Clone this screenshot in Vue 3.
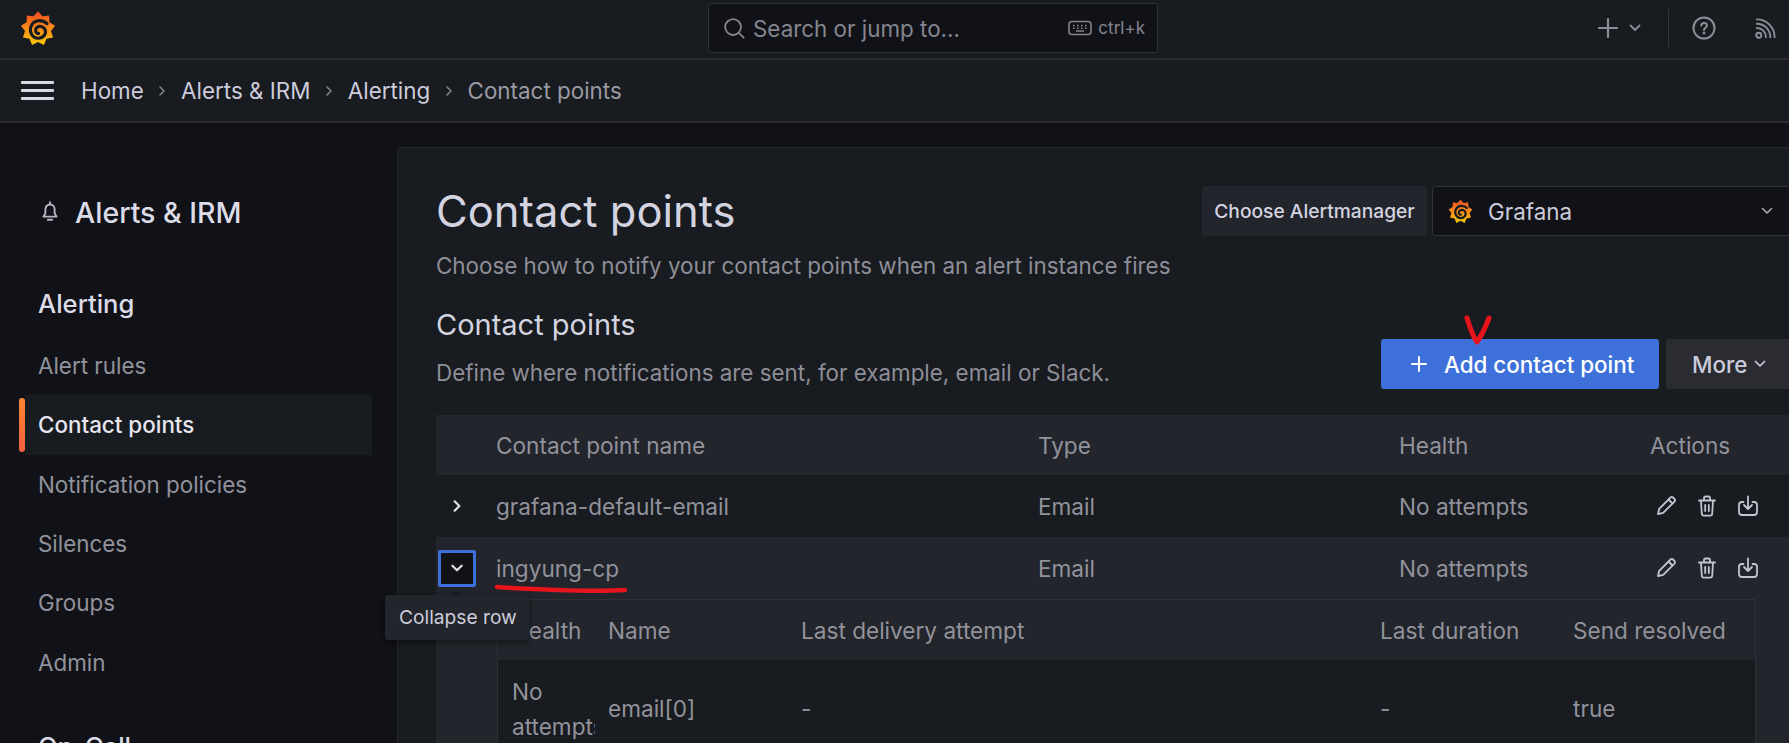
<template>
  <div class="app">
    <svg class="defs" width="0" height="0">
      <defs>
        <linearGradient id="sun" x1="0" y1="0" x2="0" y2="1">
          <stop offset="0" stop-color="#ea4a1f" />
          <stop offset="0.4" stop-color="#f97f1c" />
          <stop offset="1" stop-color="#fbca0a" />
        </linearGradient>
        <symbol id="logo" viewBox="0 0 24 24">
          <path :d="sunPath" fill="url(#sun)" />
          <path
            d="M18 9.2C15.6 6.4 10 6.2 7.8 10C5.6 14 8 18.8 12.2 18.8C15.6 18.8 17.6 16 16.8 13.4C16 11 12.6 10 10.9 12C9.7 13.5 10.6 15.6 12.4 15.6"
            fill="none"
            stroke="#181b1f"
            stroke-width="2.1"
            stroke-linecap="round"
          />
        </symbol>
      </defs>
    </svg>

    <header class="topbar">
      <svg class="top-logo"><use href="#logo" /></svg>
      <div class="search">
        <svg class="search-icon" viewBox="0 0 24 24" fill="none" stroke="currentColor" stroke-width="2">
          <circle cx="11" cy="11" r="8.6" />
          <path d="M17.5 17.5L22.5 22.5" stroke-linecap="round" />
        </svg>
        <span class="search-text">Search or jump to...</span>
        <svg class="kbd-icon" viewBox="0 0 24 16" fill="none" stroke="currentColor" stroke-width="1.6">
          <rect x="1" y="1.5" width="22" height="13" rx="3" />
          <path d="M5 5.6h1.5M9 5.6h1.5M13 5.6h1.5M17 5.6h1.5M5 8.2h1.5M9 8.2h1.5M13 8.2h1.5M17 8.2h1.5M8 11h8" />
        </svg>
        <span class="kbd-text">ctrl+k</span>
      </div>
      <div class="top-actions">
        <svg class="plus-icon" viewBox="0 0 22 22" fill="none" stroke="currentColor" stroke-width="2.2" stroke-linecap="round">
          <path d="M11 2v18M2 11h18" />
        </svg>
        <svg class="small-chevron" viewBox="0 0 12 8" fill="none" stroke="currentColor" stroke-width="1.8" stroke-linecap="round" stroke-linejoin="round">
          <path d="M1.5 1.5L6 6l4.5-4.5" />
        </svg>
        <span class="top-divider"></span>
        <svg class="help-icon" viewBox="0 0 24 24" fill="none" stroke="currentColor" stroke-width="2">
          <circle cx="12" cy="12" r="10.5" />
          <path d="M9.2 9.6C9.4 7.9 10.6 7 12.1 7c1.6 0 2.8 1 2.8 2.4 0 2.3-2.9 2.3-2.9 4.6" stroke-linecap="round" />
          <circle cx="12" cy="17" r="0.6" />
        </svg>
        <svg class="rss-icon" viewBox="0 0 24 24" fill="none" stroke="currentColor" stroke-width="2" stroke-linecap="round">
          <circle cx="5" cy="19" r="2.6" />
          <path d="M3 11.5a9.5 9.5 0 0 1 9.5 9.5M3 7a14 14 0 0 1 14 14M3 2.5A18.5 18.5 0 0 1 21.5 21" />
        </svg>
      </div>
    </header>

    <nav class="crumbbar">
      <div class="burger"><span></span><span></span><span></span></div>
      <template v-for="(crumb, i) in crumbs" :key="crumb">
        <span class="crumb" :class="{ last: i === crumbs.length - 1 }">{{ crumb }}</span>
        <svg v-if="i < crumbs.length - 1" class="crumb-sep" viewBox="0 0 8 12" fill="none" stroke="currentColor" stroke-width="1.5" stroke-linecap="round" stroke-linejoin="round">
          <path d="M2 2l4 4-4 4" />
        </svg>
      </template>
    </nav>

    <div class="body">
      <aside class="sidebar">
        <div class="side-title">
          <svg class="bell" viewBox="0 0 16 20" fill="none" stroke="currentColor" stroke-width="1.7" stroke-linejoin="round">
            <path d="M8 3.2c-2.8 0-4.2 2.2-4.2 4.6v3.4L2 14.2h12l-1.8-3V7.800c0-2.400-1.400-4.600-4.200-4.600z" />
            <path d="M6 17h4M8 1v2" stroke-linecap="round" />
          </svg>
          <span>Alerts &amp; IRM</span>
        </div>
        <div class="side-heading">Alerting</div>
        <div class="side-list">
          <div v-for="item in navItems" :key="item" class="side-item" :class="{ active: item === 'Contact points' }">
            <span>{{ item }}</span>
          </div>
        </div>
        <div class="side-heading oncall">On-Call</div>
      </aside>

      <main class="panel">
        <div class="page-head">
          <div>
            <h1>Contact points</h1>
            <p class="subtitle">Choose how to notify your contact points when an alert instance fires</p>
          </div>
          <div class="am-picker">
            <div class="am-label">Choose Alertmanager</div>
            <div class="am-select">
              <svg class="am-logo"><use href="#logo" /></svg>
              <span>Grafana</span>
              <svg class="am-chevron" viewBox="0 0 12 8" fill="none" stroke="currentColor" stroke-width="1.6" stroke-linecap="round" stroke-linejoin="round">
                <path d="M1.500 1.500L6 6l4.500-4.500" />
              </svg>
            </div>
          </div>
        </div>

        <div class="section-head">
          <div>
            <h2>Contact points</h2>
            <p class="section-desc">Define where notifications are sent, for example, email or Slack.</p>
          </div>
          <div class="section-actions">
            <button class="btn-add">
              <svg viewBox="0 0 18 18" fill="none" stroke="currentColor" stroke-width="2" stroke-linecap="round">
                <path d="M9 2v14M2 9h14" />
              </svg>
              Add contact point
            </button>
            <button class="btn-more">
              More
              <svg viewBox="0 0 12 8" fill="none" stroke="currentColor" stroke-width="1.700" stroke-linecap="round" stroke-linejoin="round">
                <path d="M1.500 1.500L6 6l4.500-4.500" />
              </svg>
            </button>
          </div>
        </div>

        <div class="table">
          <div class="tr th">
            <span></span>
            <span>Contact point name</span>
            <span>Type</span>
            <span>Health</span>
            <span>Actions</span>
          </div>
          <div v-for="row in rows" :key="row.name" class="tr" :class="{ open: row.open }">
            <span class="toggle" :class="{ focused: row.open }">
              <svg viewBox="0 0 12 12" fill="none" stroke="currentColor" stroke-width="1.900" stroke-linecap="round" stroke-linejoin="round">
                <path :d="row.open ? 'M2 4l4 4 4-4' : 'M4 2l4 4-4 4'" />
              </svg>
            </span>
            <span>{{ row.name }}</span>
            <span>Email</span>
            <span>No attempts</span>
            <span class="actions">
              <svg viewBox="0 0 24 24" fill="none" stroke="currentColor" stroke-width="1.800" stroke-linejoin="round">
                <path d="M4 20l1.200-5.200L16.500 3.500a1.800 1.800 0 0 1 2.500 0l1.500 1.500a1.800 1.800 0 0 1 0 2.500L9.200 18.800zM14.500 5.500l4 4" />
              </svg>
              <svg viewBox="0 0 24 24" fill="none" stroke="currentColor" stroke-width="1.800" stroke-linecap="round" stroke-linejoin="round">
                <path d="M4 6.500h16M9 6V4a1.500 1.500 0 0 1 1.500-1.500h3A1.500 1.500 0 0 1 15 4v2M6 7l.8 13a2 2 0 0 0 2 1.700h6.400a2 2 0 0 0 2-1.700L18 7M10.200 11v6M13.800 11v6" />
              </svg>
              <svg viewBox="0 0 24 24" fill="none" stroke="currentColor" stroke-width="1.800" stroke-linecap="round" stroke-linejoin="round">
                <path d="M12 2.500v12M8 11l4 4 4-4M7.500 8H6a3 3 0 0 0-3 3v7a3 3 0 0 0 3 3h12a3 3 0 0 0 3-3v-7a3 3 0 0 0-3-3h-1.500" />
              </svg>
            </span>
          </div>
          <div class="expanded">
            <div class="nested">
              <div class="ntr nth">
                <span>Health</span>
                <span>Name</span>
                <span>Last delivery attempt</span>
                <span>Last duration</span>
                <span>Send resolved</span>
              </div>
              <div class="ntr nbody">
                <span class="nhealth">No attempts</span>
                <span>email[0]</span>
                <span>-</span>
                <span>-</span>
                <span>true</span>
              </div>
            </div>
          </div>
        </div>
      </main>
    </div>

    <div class="tooltip">Collapse row</div>

    <svg class="marks" width="1789" height="743" fill="none" stroke="#e8141c" stroke-linecap="round" stroke-linejoin="round">
      <path d="M1467 318C1470 328 1473 337 1477 342C1482 335 1486 326 1489 318" stroke-width="5" />
      <path d="M497 587C530 589 590 592 625 590" stroke-width="4.500" />
    </svg>
  </div>
</template>

<script setup>
  const crumbs = ['Home', 'Alerts & IRM', 'Alerting', 'Contact points'];
  const navItems = ['Alert rules', 'Contact points', 'Notification policies', 'Silences', 'Groups', 'Admin'];
  const rows = [
    { name: 'grafana-default-email', open: false },
    { name: 'ingyung-cp', open: true }
  ];

  // nine rounded rays around the logo's disc
  const buildSun = () => {
    const pts = [];
    const count = 9;
    for (let i = 0; i < count * 2; i++) {
      const r = i % 2 === 0 ? 11.6 : 8.8;
      const a = (i / (count * 2)) * Math.PI * 2 - Math.PI / 2;
      pts.push(`${(12 + Math.cos(a) * r).toFixed(2)} ${(12.5 + Math.sin(a) * r).toFixed(2)}`);
    }
    return `M${pts.join('L')}Z`;
  };
  const sunPath = buildSun();
</script>

<style>
  html, body {
    margin: 0;
    background: #111217;
  }
</style>

<style scoped>
  .app {
    position: relative;
    width: 1789px;
    height: 743px;
    overflow: hidden;
    background: #111217;
    color: #ccccdc;
    font-family: Inter, "Noto Sans", sans-serif;
    font-size: 22.4px;
  }
  .defs {
    position: absolute;
  }

  .topbar {
    display: flex;
    align-items: center;
    height: 60px;
    box-sizing: border-box;
    background: #181b1f;
    border-bottom: 2px solid #2a2c31;
    padding: 0 12px 2px 20px;
  }
  .top-logo {
    width: 36px;
    height: 38px;
  }
  .search {
    display: flex;
    align-items: center;
    box-sizing: border-box;
    width: 450px;
    height: 50px;
    margin-left: 652px;
    padding: 0 12px 0 14px;
    background: #111217;
    border: 1px solid #2f3137;
    border-radius: 3px;
    color: #85858f;
  }
  .search-icon {
    width: 22px;
    height: 22px;
  }
  .search-text {
    margin-left: 8px;
  }
  .kbd-icon {
    width: 24px;
    height: 16px;
    margin-left: auto;
  }
  .kbd-text {
    margin-left: 6px;
    font-size: 17px;
  }
  .top-actions {
    display: flex;
    align-items: center;
    margin-left: auto;
    color: #8e8e98;
  }
  .plus-icon {
    width: 22px;
    height: 22px;
  }
  .small-chevron {
    width: 12px;
    height: 8px;
    margin-left: 10px;
  }
  .top-divider {
    width: 1px;
    height: 38px;
    margin: 0 23px 0 27px;
    background: #33353b;
  }
  .help-icon {
    width: 24px;
    height: 24px;
  }
  .rss-icon {
    width: 23px;
    height: 23px;
    margin-left: 38px;
  }

  .crumbbar {
    display: flex;
    align-items: center;
    box-sizing: border-box;
    height: 63px;
    padding: 0 0 0 21px;
    background: #181b1f;
    border-bottom: 2px solid #2a2c31;
  }
  .burger {
    display: flex;
    flex-direction: column;
    gap: 5px;
    width: 33px;
    margin-right: 27px;
  }
  .burger span {
    height: 3px;
    background: #d8d8e4;
    border-radius: 1px;
  }
  .crumb {
    color: #ccccdc;
  }
  .crumb.last {
    color: #9a9aa5;
  }
  .crumb-sep {
    width: 8px;
    height: 12px;
    margin: 0 14.7px;
    color: #85858f;
  }

  .body {
    display: flex;
  }
  .sidebar {
    flex: 0 0 397px;
    box-sizing: border-box;
    padding-top: 74px;
  }
  .side-title {
    display: flex;
    align-items: center;
    gap: 16px;
    height: 30px;
    padding-left: 41px;
    font-size: 28.5px;
    font-weight: 500;
    color: #dcdce8;
  }
  .bell {
    width: 18px;
    height: 22px;
    color: #b8b8c4;
  }
  .side-heading {
    height: 30px;
    line-height: 30px;
    margin-top: 62px;
    padding-left: 38px;
    font-size: 25.6px;
    font-weight: 500;
    color: #dcdce8;
  }
  .side-heading.oncall {
    margin-top: 40px;
  }
  .side-list {
    margin-top: 17px;
  }
  .side-item {
    position: relative;
    display: flex;
    align-items: center;
    box-sizing: border-box;
    height: 59.3px;
    margin: 0 25px;
    padding-left: 13px;
    color: #92929c;
  }
  .side-item.active {
    background: #181b1f;
    color: #e6e6f0;
    font-weight: 500;
  }
  .side-item.active::before {
    content: '';
    position: absolute;
    left: -6px;
    top: 3px;
    bottom: 3px;
    width: 6px;
    border-radius: 3px;
    background: linear-gradient(#ff8833, #f55f3e);
  }

  .panel {
    flex: 0 0 1440px;
    box-sizing: border-box;
    height: 620px;
    margin-top: 24px;
    padding: 38px 0 0 38px;
    background: #181b1f;
    border: 1px solid #24262c;
    border-radius: 3px 0 0 0;
  }
  .page-head {
    display: flex;
    justify-content: space-between;
    align-items: flex-start;
  }
  h1 {
    margin: 0;
    height: 50px;
    line-height: 50px;
    font-size: 43.5px;
    font-weight: 400;
    color: #d4d4e0;
  }
  .subtitle {
    margin: 16px 0 0;
    line-height: 28px;
    color: #8e8e98;
  }
  .am-picker {
    display: flex;
    gap: 5px;
    width: 634px;
    flex: none;
  }
  .am-label {
    display: flex;
    align-items: center;
    justify-content: center;
    box-sizing: border-box;
    flex: 0 0 225px;
    height: 50px;
    background: #22252b;
    border-radius: 3px;
    font-size: 19.2px;
    font-weight: 500;
    white-space: nowrap;
    color: #d4d4e0;
  }
  .am-select {
    display: flex;
    align-items: center;
    box-sizing: border-box;
    flex: 1;
    height: 50px;
    padding: 0 62px 0 15px;
    background: #111217;
    border: 1px solid #2f3137;
    border-radius: 3px;
    color: #ccccdc;
  }
  .am-logo {
    width: 25px;
    height: 26px;
    margin-right: 15px;
  }
  .am-chevron {
    width: 12px;
    height: 8px;
    margin-left: auto;
    color: #a8a8b4;
  }

  .section-head {
    display: flex;
    justify-content: space-between;
    align-items: flex-end;
    height: 81px;
    margin-top: 28px;
  }
  h2 {
    margin: 0;
    height: 34px;
    line-height: 34px;
    font-size: 29px;
    font-weight: 400;
    color: #d4d4e0;
  }
  .section-desc {
    margin: 17px 0 2px;
    line-height: 28px;
    color: #8e8e98;
  }
  .section-actions {
    display: flex;
    gap: 7px;
    width: 455px;
    flex: none;
  }
  .section-actions button {
    display: flex;
    align-items: center;
    box-sizing: border-box;
    height: 50px;
    border: none;
    border-radius: 3px;
    font-family: inherit;
    font-size: 22.4px;
    font-weight: 500;
  }
  .btn-add {
    flex: 0 0 278px;
    padding: 0 0 0 29px;
    background: #3d71d9;
    color: #fff;
  }
  .btn-add svg {
    width: 18px;
    height: 18px;
    margin-right: 16px;
  }
  .btn-more {
    flex: 1;
    padding: 0 0 0 26px;
    background: #2a2c31;
    color: #ccccdc;
  }
  .btn-more svg {
    width: 12px;
    height: 8px;
    margin-left: 7px;
  }

  .table {
    margin-top: 26px;
    width: 1400px;
  }
  .tr {
    display: grid;
    grid-template-columns: 60px 542px 361px 251px 1fr;
    align-items: center;
    height: 62px;
    background: #181b1f;
    color: #92929c;
    font-size: 22.6px;
  }
  .tr.th {
    height: 60px;
    background: #22252b;
  }
  .tr.open {
    background: #22252b;
  }
  .toggle {
    display: flex;
    align-items: center;
    justify-content: center;
    box-sizing: border-box;
    width: 38px;
    height: 37px;
    margin-left: 2px;
    color: #e0e0ea;
    border: 3px solid transparent;
    border-radius: 2px;
  }
  .toggle svg {
    width: 14px;
    height: 14px;
  }
  .toggle.focused {
    background: #111217;
    border-color: #3d71d9;
  }
  .actions {
    display: flex;
    gap: 17px;
    padding-left: 4px;
    color: #c4c4d0;
  }
  .actions svg {
    width: 24px;
    height: 24px;
  }
  .expanded {
    height: 160px;
    padding-left: 61px;
    background: #22252b;
  }
  .nested {
    width: 1257px;
    border-top: 1px solid #2f3137;
    border-left: 1px solid #2f3137;
    border-right: 1px solid #2f3137;
  }
  .ntr {
    display: grid;
    grid-template-columns: 110px 193px 579px 193px 1fr;
    align-items: center;
    color: #92929c;
    font-size: 22.6px;
  }
  .nth {
    height: 60px;
    background: #22252b;
  }
  .nth span:first-child {
    padding-left: 14px;
  }
  .nbody {
    height: 97px;
    background: #181b1f;
    line-height: 35px;
  }
  .nhealth {
    box-sizing: border-box;
    width: 97px;
    padding-left: 14px;
    overflow: hidden;
  }

  .tooltip {
    position: absolute;
    left: 385px;
    top: 595px;
    box-sizing: border-box;
    width: 144px;
    height: 45px;
    padding-left: 14px;
    line-height: 45px;
    background: #22252b;
    border-radius: 3px;
    box-shadow: 0 2px 6px rgba(0, 0, 0, 0.45);
    font-size: 19.2px;
    white-space: nowrap;
    color: #ccccdc;
  }
  .tooltip::before {
    content: '';
    position: absolute;
    left: 66px;
    top: -10px;
    border: 5px solid transparent;
    border-bottom: 5px solid #181b1f;
  }
  .marks {
    position: absolute;
    left: 0;
    top: 0;
    pointer-events: none;
  }
</style>
